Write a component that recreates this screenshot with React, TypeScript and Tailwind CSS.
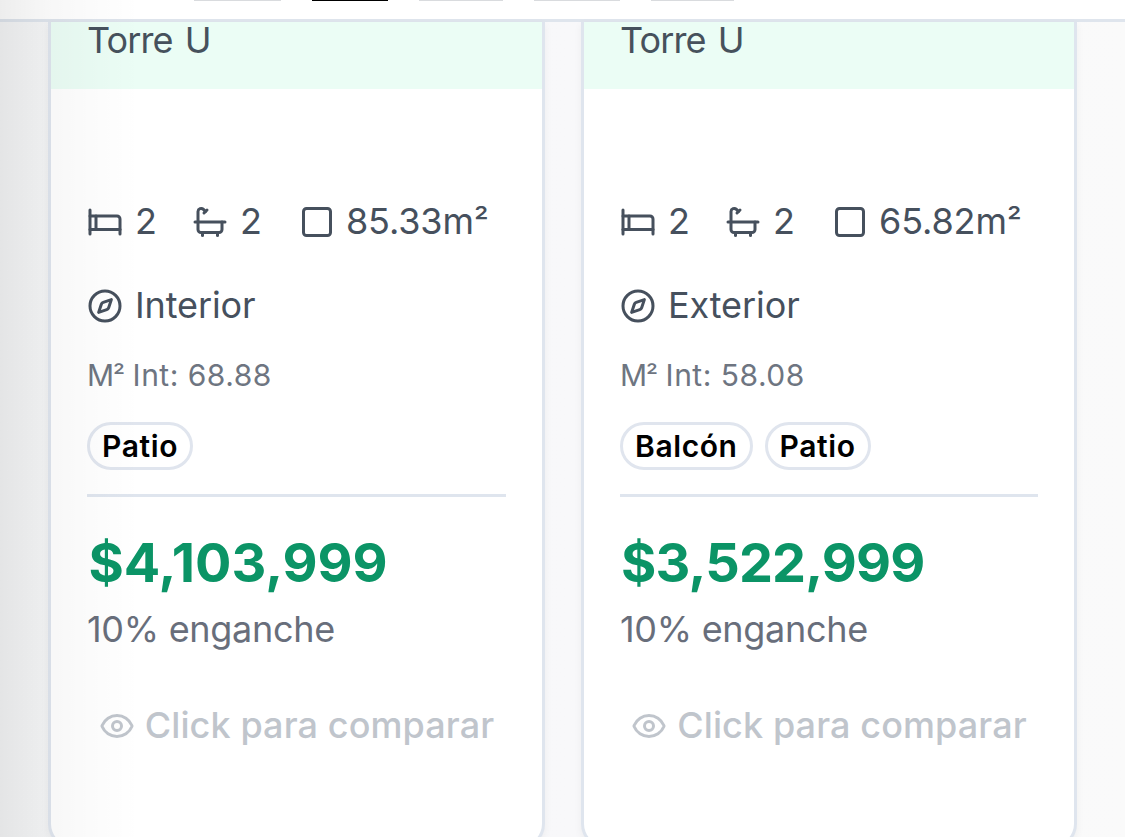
import { Bath, Bed, Compass, Eye, Square } from "lucide-react";

type Unit = {
  tower: string;
  beds: number;
  baths: number;
  area: string;
  view: string;
  interior: string;
  extras: string[];
  price: string;
  priceStyle: string;
};

const units: Unit[] = [
  {
    tower: "Torre U",
    beds: 2,
    baths: 2,
    area: "85.33",
    view: "Interior",
    interior: "68.88",
    extras: ["Patio"],
    price: "$4,103,999",
    priceStyle: "pl-[1.5px] tracking-normal",
  },
  {
    tower: "Torre U",
    beds: 2,
    baths: 2,
    area: "65.82",
    view: "Exterior",
    interior: "58.08",
    extras: ["Balcón", "Patio"],
    price: "$3,522,999",
    priceStyle: "pl-[1px] tracking-[-0.85px]",
  },
];

const Filters = () => {
  return (
    <header className="h-[22px] shrink-0 border-b-[3px] border-[#dfe5ed] bg-white">
      <div className="flex h-px gap-[31px] pl-[194px]">
        <div className="w-[87px] bg-[#d9dbde]"></div>
        <div className="w-[76px] bg-black"></div>
        <div className="w-[84px] bg-[#d9dbde]"></div>
        <div className="w-[86px] bg-[#d9dbde]"></div>
        <div className="w-[83px] bg-[#d9dbde]"></div>
      </div>
    </header>
  );
};

const UnitCard = ({ unit }: { unit: Unit }) => {
  return (
    <article className="h-[826px] rounded-b-[24px] border-x-[3px] border-b-[3px] border-[#dfe5ee] bg-white shadow-[0_3px_9px_rgba(0,0,0,0.05)]">
      <div className="h-[67px] bg-[#ebfdf5] px-9 text-[36px] leading-[37px] tracking-[-0.9px] text-[#46515c] [word-spacing:3px]">
        {unit.tower}
      </div>
      <div className="px-9 pt-[108px] text-[36px] text-[#46505d]">
        <div className="flex h-12 items-center">
          <div className="flex items-center gap-3">
            <Bed size={36} className="mt-0.5" />
            <span>{unit.beds}</span>
          </div>
          <div className="ml-[35.5px] flex items-center gap-[11.5px]">
            <Bath size={36} className="mt-0.5" />
            <span>{unit.baths}</span>
          </div>
          <div className="ml-[37px] flex items-center gap-[11px]">
            <Square size={36} className="mt-0.5" />
            <span className="tracking-[-0.1px]">
              {unit.area}m<span className="text-[33px]">²</span>
            </span>
          </div>
        </div>
        <div className="mt-9 flex h-12 items-center gap-3">
          <Compass size={36} className="mt-0.5" />
          <span className="tracking-[-0.1px]">{unit.view}</span>
        </div>
        <p className="mt-[24px] h-[45px] text-[30px] leading-[45px] tracking-[0.5px] text-[#6e7581]">
          <span className="tracking-[-1.2px]">
            M<span className="text-[27px]">²</span>
          </span>{" "}
          Int: {unit.interior}
        </p>
        <div className="mt-[24px] flex gap-3">
          {unit.extras.map((extra) => (
            <span
              key={extra}
              className="h-12 rounded-full border-[3px] border-[#e0e5ee] px-3 text-[30px] leading-[43px] font-semibold tracking-[0.6px] text-black"
            >
              {extra}
            </span>
          ))}
        </div>
        <div className="mt-6 border-t-[3px] border-[#dfe5ee] pt-9">
          <p
            className={`text-[54px] leading-[60px] font-bold text-[#0b9466] ${unit.priceStyle}`}
          >
            {unit.price}
          </p>
          <p className="mt-[12px] text-[36px] leading-[48px] tracking-[-0.3px] text-[#686e7b]">
            10% enganche
          </p>
        </div>
        <button className="mt-[48px] flex h-12 w-full items-center justify-center gap-[10px] font-medium text-[#c0c5cc]">
          <Eye size={36} className="mt-0.5" />
          <span className="tracking-[0.1px] whitespace-nowrap">
            Click para comparar
          </span>
        </button>
      </div>
    </article>
  );
};

export default function App() {
  return (
    <div className="relative flex h-[837px] w-[1125px] flex-col overflow-hidden bg-[#fafafa] font-['Inter',sans-serif]">
      <Filters />
      <main className="grid grid-cols-[497px_496px] gap-9 bg-linear-to-r from-[#f5f6f7] via-[#f8f8fa] via-50% to-[#fafafa] pl-12">
        {units.map((unit) => (
          <UnitCard key={unit.price} unit={unit} />
        ))}
      </main>
      {/* edge shade */}
      <div className="pointer-events-none absolute inset-y-0 left-0 w-[140px] bg-linear-to-r from-black/7 via-black/3 via-35% to-transparent"></div>
    </div>
  );
}
